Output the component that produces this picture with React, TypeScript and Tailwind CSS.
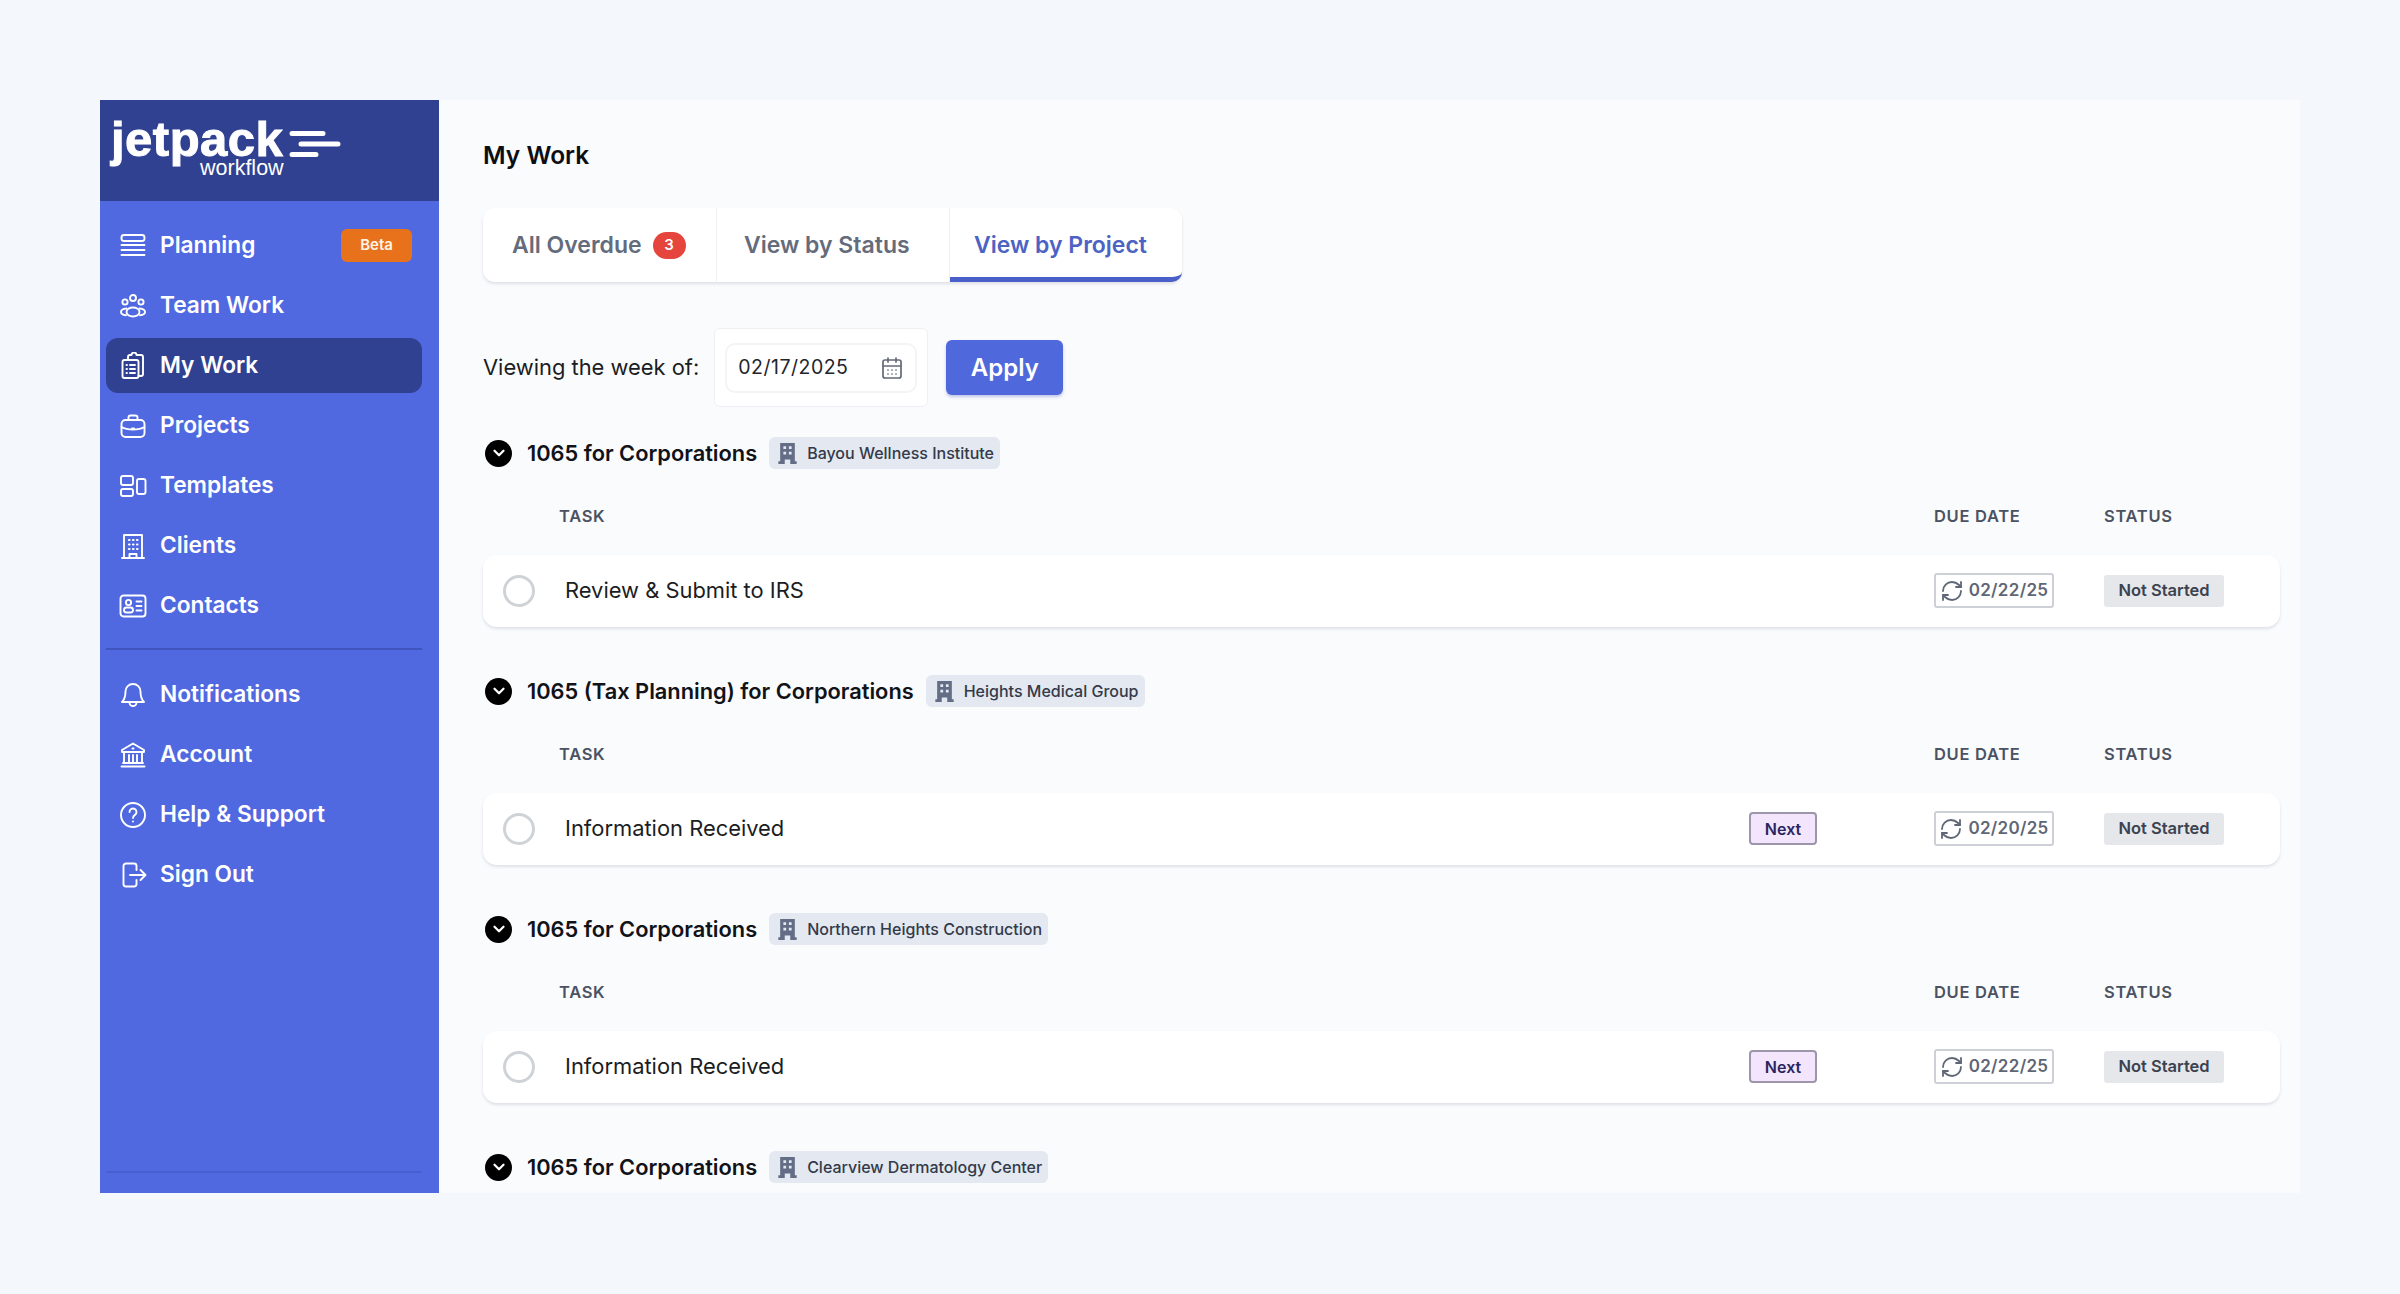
import { CalendarDays, ChevronDown, RefreshCw } from "lucide-react";
import type { ReactNode } from "react";

const Icon = ({ children }: { children: ReactNode }) => (
  <svg viewBox="0 0 28 28" fill="none" stroke="currentColor" strokeWidth="1.9" strokeLinecap="round" strokeLinejoin="round" className="h-[28px] w-[28px] shrink-0">
    {children}
  </svg>
);

const icons: Record<string, ReactNode> = {
  planning: (
    <Icon>
      <rect x="2.5" y="3" width="23" height="6" rx="2.5" />
      <path d="M2.5 13h23M2.5 18h23M2.5 23h23" />
    </Icon>
  ),
  team: (
    <Icon>
      <circle cx="14" cy="6" r="3" />
      <circle cx="6" cy="10" r="2.6" />
      <circle cx="22" cy="10" r="2.6" />
      <ellipse cx="14" cy="20" rx="6.5" ry="4.5" />
      <path d="M7.5 16.5c-3 .3-5.5 1.6-5.5 3.5s2.5 3 5 3.2M20.5 16.5c3 .3 5.5 1.6 5.5 3.5s-2.5 3-5 3.2" />
    </Icon>
  ),
  mywork: (
    <Icon>
      <rect x="3.5" y="8" width="16" height="18" rx="2" />
      <path d="M9 8V5a2 2 0 0 1 2-2h1.500a2.500 2.500 0 0 1 5 0H22a2 2 0 0 1 2 2v17a2 2 0 0 1-2 2h-2.500" />
      <path d="M7.500 13h.5M11 13h5M7.500 17h.5M11 17h5M7.500 21h.5M11 21h5" />
    </Icon>
  ),
  projects: (
    <Icon>
      <rect x="2.500" y="8" width="23" height="17" rx="4" />
      <path d="M9.500 8V5.500a2 2 0 0 1 2-2h5a2 2 0 0 1 2 2V8M2.500 15c3.500 2 7 2.500 11.500 2.500S22 17 25.500 15" />
      <path d="M13 16.500h2" />
    </Icon>
  ),
  templates: (
    <Icon>
      <rect x="2" y="4" width="12" height="9" rx="2" />
      <rect x="2" y="17" width="12" height="7" rx="2" />
      <rect x="18" y="7" width="8.500" height="15" rx="2" />
    </Icon>
  ),
  clients: (
    <Icon>
      <path d="M5 26V3h18v23M3 26h22" />
      <path d="M10 8h.5M14 8h.5M18 8h.5M10 12.500h.5M14 12.500h.5M18 12.500h.5M10 17h.5M14 17h.5M18 17h.5" strokeWidth="2.200" />
      <path d="M10.500 26v-4h7v4" />
    </Icon>
  ),
  contacts: (
    <Icon>
      <rect x="1.500" y="3.500" width="25" height="21" rx="3" />
      <circle cx="9.500" cy="10.500" r="2.600" />
      <rect x="5" y="15.500" width="9" height="5" rx="2.500" />
      <path d="M17.500 9.500h5M17.500 14h5M17.500 18.500h5" />
    </Icon>
  ),
  notifications: (
    <Icon>
      <path d="M14 3a7.500 7.500 0 0 0-7.500 7.500c0 6-1 8-3.500 10.500h22c-2.500-2.500-3.500-4.500-3.500-10.500A7.500 7.500 0 0 0 14 3z" />
      <path d="M10.500 21.500a3.500 3.500 0 0 0 7 0" />
    </Icon>
  ),
  account: (
    <Icon>
      <path d="M14 2.500 3 9v2h22V9L14 2.500z" />
      <path d="M5 11v11M23 11v11M10 14v8M14 14v8M18 14v8M2.500 25.500h23M4 22h20" />
      <path d="M13.500 7.500h1" />
    </Icon>
  ),
  help: (
    <Icon>
      <circle cx="14" cy="14" r="12" />
      <path d="M10.500 11a3.500 3.500 0 1 1 5.500 2.900c-1.300.9-2 1.500-2 3" />
      <path d="M14 20.500h.01" />
    </Icon>
  ),
  signout: (
    <Icon>
      <path d="M17.500 9V5a2.500 2.500 0 0 0-2.500-2.500H7A2.500 2.500 0 0 0 4.500 5v18A2.500 2.500 0 0 0 7 25.500h8a2.500 2.500 0 0 0 2.500-2.500v-4" />
      <path d="M11 14h15M21.500 9l5 5-5 5" />
    </Icon>
  ),
};

const topNav = [
  { id: "planning", label: "Planning", beta: true },
  { id: "team", label: "Team Work" },
  { id: "mywork", label: "My Work", active: true },
  { id: "projects", label: "Projects" },
  { id: "templates", label: "Templates" },
  { id: "clients", label: "Clients" },
  { id: "contacts", label: "Contacts" },
];

const bottomNav = [
  { id: "notifications", label: "Notifications" },
  { id: "account", label: "Account" },
  { id: "help", label: "Help & Support" },
  { id: "signout", label: "Sign Out" },
];

type NavEntry = { id: string; label: string; beta?: boolean; active?: boolean };

const NavRow = ({ item }: { item: NavEntry }) => (
  <div className={`flex h-[55px] items-center gap-[13px] rounded-[12px] pl-[13px] pr-[10px] text-[22.700px] font-semibold text-white ${item.active ? "bg-[#2f4190]" : ""}`}>
    {icons[item.id]}
    <span>{item.label}</span>
    {item.beta && (
      <span className="ml-auto flex h-[33px] w-[71px] items-center justify-center rounded-[6px] bg-[#e8711c] text-[15px] font-semibold text-[#fff3e6]">
        Beta
      </span>
    )}
  </div>
);

const groups = [
  { title: "1065 for Corporations", client: "Bayou Wellness Institute", task: "Review & Submit to IRS", due: "02/22/25" },
  { title: "1065 (Tax Planning) for Corporations", client: "Heights Medical Group", task: "Information Received", due: "02/20/25", next: true },
  { title: "1065 for Corporations", client: "Northern Heights Construction", task: "Information Received", due: "02/22/25", next: true },
  { title: "1065 for Corporations", client: "Clearview Dermatology Center" },
];

type Group = { title: string; client: string; task?: string; due?: string; next?: boolean };

const BuildingSolid = () => (
  <svg viewBox="0 0 20 24" className="h-[22px] w-[19px] shrink-0 text-[#636d85]" fill="currentColor">
    <path fillRule="evenodd" d="M2 1h16v20h2v3h-7v-5H7v5H0v-3h2V1zm3.500 3.500v3h3v-3h-3zm6 0v3h3v-3h-3zm-6 6v3h3v-3h-3zm6 0v3h3v-3h-3z" />
  </svg>
);

const ProjectGroup = ({ group }: { group: Group }) => (
  <section className="h-[238px] shrink-0">
    <div className="flex h-[32px] items-center">
      <span className="ml-[2px] flex h-[27px] w-[27px] items-center justify-center rounded-full bg-black text-white">
        <ChevronDown className="h-[18px] w-[18px]" strokeWidth={3} />
      </span>
      <h2 className="ml-[15px] text-[21.800px] font-semibold text-[#111318]">{group.title}</h2>
      <span className="ml-[12px] flex h-[32px] items-center gap-[10px] rounded-[6px] bg-[#e3e8f1] pl-[9px] pr-[6px] text-[16px] font-medium text-[#333a49]">
        <BuildingSolid />
        {group.client}
      </span>
    </div>
    {group.task && (
      <>
        <div className="mt-[35px] flex text-[16.500px] font-semibold tracking-[0.7px] text-[#4b5262]">
          <span className="ml-[76px]">TASK</span>
          <span className="ml-auto w-[170px]">DUE DATE</span>
          <span className="w-[176px]">STATUS</span>
        </div>
        <div className="mt-[26px] flex h-[72px] items-center rounded-[14px] bg-white pl-[20px] pr-[56px] shadow-[0_2px_3px_rgba(30,40,70,0.12)]">
          <span className="h-[32px] w-[32px] rounded-full border-[3px] border-[#cfd2d6]" />
          <span className="ml-[30px] text-[21.900px] text-[#1b1d22]">{group.task}</span>
          {group.next && (
            <span className="ml-auto flex h-[33px] w-[68px] items-center justify-center rounded-[4px] border-2 border-[#9d96ab] bg-[#f3e5fb] text-[16px] font-semibold text-[#2a2560]">
              Next
            </span>
          )}
          <span className={`${group.next ? "ml-[117px]" : "ml-auto"} flex h-[35px] w-[120px] items-center justify-center gap-[5px] rounded-[3px] border-2 border-[#cdd0d6] text-[17px] font-semibold tracking-[0.3px] text-[#5f6675]`}>
            <RefreshCw className="h-[24px] w-[24px] shrink-0" strokeWidth={1.8} />
            {group.due}
          </span>
          <span className="ml-[50px] flex h-[32px] w-[120px] items-center justify-center rounded-[3px] bg-[#e5e7eb] text-[16.500px] font-semibold text-[#3b4250]">
            Not Started
          </span>
        </div>
      </>
    )}
  </section>
);

export default function App() {
  return (
    <div className="h-screen bg-[#f4f8fc] px-[100px] pt-[100px] font-['Inter',sans-serif]">
      <div className="flex h-[1093px] overflow-hidden bg-[#fafbfd]">
        <aside className="flex w-[339px] shrink-0 flex-col bg-[#5069e0]">
          <div className="flex h-[101px] shrink-0 flex-col bg-[#2f4190] pl-[11px] pt-[18px] text-white">
            <div className="flex items-center">
              <span className="font-['Liberation_Sans',sans-serif] text-[49px] font-bold leading-[40px] tracking-[0.5px] [-webkit-text-stroke:1px_white]">jetpack</span>
              <svg viewBox="0 0 52 30" className="ml-[6px] mt-[11px] h-[30px] w-[52px]" fill="none" stroke="#fff" strokeWidth="5" strokeLinecap="round">
                <path d="M3 4.500h31M12 15h37M3 25.500h24" />
              </svg>
            </div>
            <span className="ml-[89px] font-['Liberation_Sans',sans-serif] text-[21.500px] leading-[18px]">workflow</span>
          </div>
          <nav className="mt-[17px] flex flex-col gap-[5px] pl-[6px] pr-[17px]">
            {topNav.map((item) => (
              <NavRow key={item.id} item={item} />
            ))}
          </nav>
          <div className="mx-[6px] mr-[17px] mt-[15px] h-[2px] bg-[#3f54bd]" />
          <nav className="mt-[17px] flex flex-col gap-[5px] pl-[6px] pr-[17px]">
            {bottomNav.map((item) => (
              <NavRow key={item.id} item={item} />
            ))}
          </nav>
          <div className="mx-[6px] mr-[17px] mt-auto mb-[20px] h-[2px] bg-[#4860cf]" />
        </aside>
        <main className="flex min-w-0 flex-1 flex-col pl-[44px] pr-[20px]">
          <h1 className="mt-[39px] shrink-0 text-[24.500px] font-semibold leading-[32px] text-[#0c0e12]">My Work</h1>
          <div className="mt-[37px] flex h-[74px] w-[699px] shrink-0 rounded-[12px] bg-white shadow-[0_2px_3px_rgba(30,40,70,0.12)]">
            <div className="flex w-[234px] items-center gap-[11px] border-r border-[#f0f1f4] pl-[29px] text-[23px] font-semibold text-[#646c7c]">
              All Overdue
              <span className="flex h-[27px] w-[33px] items-center justify-center rounded-full bg-[#e5453c] text-[15px] font-semibold text-white">3</span>
            </div>
            <div className="flex w-[233px] items-center border-r border-[#f0f1f4] pl-[27px] text-[23px] font-semibold text-[#646c7c]">
              View by Status
            </div>
            <div className="flex flex-1 items-center rounded-br-[10px] border-b-[5px] border-[#4a60c8] pl-[24px] pt-[5px] text-[23px] font-semibold text-[#4d63c4]">
              View by Project
            </div>
          </div>
          <div className="mt-[46px] flex shrink-0 items-center">
            <span className="text-[21.900px] text-[#1b1d22]">Viewing the week of:</span>
            <div className="ml-[15px] h-[79px] w-[214px] rounded-[6px] border border-[#eff0f3] bg-white p-[10px] pt-[14px]">
              <div className="flex h-[50px] items-center justify-between rounded-[10px] border-2 border-[#f3f4f6] pl-[11px] pr-[11px] text-[19.500px] tracking-[0.5px] text-[#22252b]">
                02/17/2025
                <CalendarDays className="h-[24px] w-[24px] text-[#636a78]" strokeWidth={1.7} />
              </div>
            </div>
            <button className="ml-[18px] flex h-[55px] w-[117px] items-center justify-center rounded-[6px] bg-[#4f68dc] text-[24px] font-semibold text-white shadow-[0_2px_3px_rgba(60,80,190,0.3)]">
              Apply
            </button>
          </div>
          <div className="mt-[30px] flex flex-col">
            {groups.map((group, i) => (
              <ProjectGroup key={i} group={group} />
            ))}
          </div>
        </main>
      </div>
    </div>
  );
}
